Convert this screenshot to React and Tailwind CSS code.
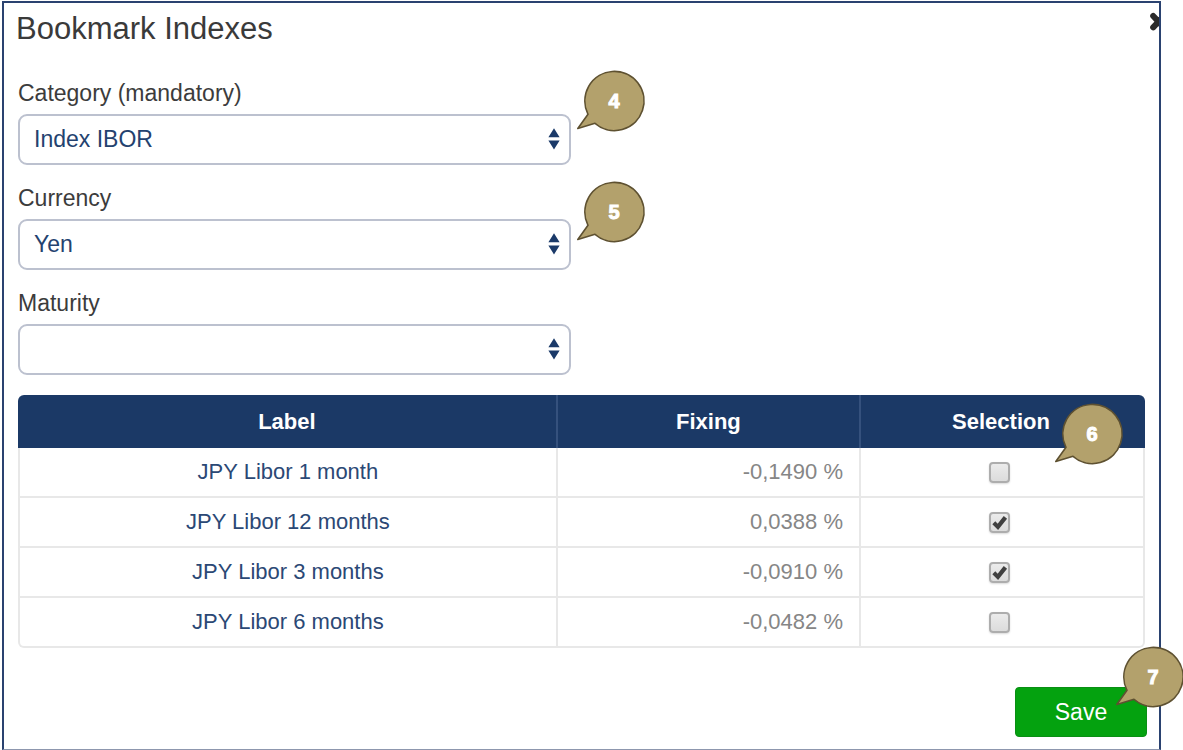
import { useState } from 'react';

function Callout({ number, className }) {
  return (
    <div className={`pointer-events-none absolute z-10 h-[62px] w-[70px] ${className}`}>
      <svg viewBox="0 -1 70 62" className="block h-full w-full overflow-visible" aria-hidden="true">
        <path
          d="M12 43.3 A29.6 29.6 0 1 1 19 52.3 L1.8 57.5 Z"
          fill="#b3a16c"
          stroke="#5e5131"
          strokeWidth="1.6"
          strokeLinejoin="round"
        />
      </svg>
      <span className="absolute inset-0 flex items-center justify-center pl-1.5 text-xl font-bold text-white [-webkit-text-stroke:1px_white]">
        {number}
      </span>
    </div>
  );
}

function SelectField({ id, label, options, children }) {
  return (
    <div className="flex flex-col gap-[7px]">
      <label htmlFor={id} className="text-[23px] leading-7 text-[#3c3c3c]">
        {label}
      </label>
      <div className="relative w-full max-w-[553px]">
        <select
          id={id}
          className="block h-[51px] w-full appearance-none rounded-[9px] border-2 border-[#bcc1cf] bg-white pr-10 pl-[14px] text-[23px] text-[#24426f]"
        >
          {options.map((option) => (
            <option key={option}>{option}</option>
          ))}
        </select>
        <svg
          viewBox="0 0 12 22"
          className="pointer-events-none absolute top-[14px] right-[11px] h-[22px] w-3"
          fill="#1b3a69"
          aria-hidden="true"
        >
          <path d="M6 0.3 L11.6 9.2 H0.4 Z M0.4 12.6 H11.6 L6 21.5 Z" />
        </svg>
        {children}
      </div>
    </div>
  );
}

const initialRows = [
  { label: 'JPY Libor 1 month', fixing: '-0,1490 %', selected: false },
  { label: 'JPY Libor 12 months', fixing: '0,0388 %', selected: true },
  { label: 'JPY Libor 3 months', fixing: '-0,0910 %', selected: true },
  { label: 'JPY Libor 6 months', fixing: '-0,0482 %', selected: false },
];

function IndexTable() {
  const [rows, setRows] = useState(initialRows);
  const toggle = (label) =>
    setRows(rows.map((row) => (row.label === label ? { ...row, selected: !row.selected } : row)));

  return (
    <table className="w-full table-fixed border-separate border-spacing-0 text-[22px] leading-7">
      <colgroup>
        <col className="w-[47.9%]" />
        <col className="w-[26.9%]" />
        <col className="w-[25.2%]" />
      </colgroup>
      <thead>
        <tr className="h-[53px] text-white">
          <th className="rounded-tl-md border-r-2 border-[#35517d] bg-[#1b3966] font-bold">Label</th>
          <th className="border-r-2 border-[#35517d] bg-[#1b3966] font-bold">Fixing</th>
          <th className="relative rounded-tr-md bg-[#1b3966] pr-1 font-bold">
            Selection
            <Callout number="6" className="top-[8px] right-[21px]" />
          </th>
        </tr>
      </thead>
      <tbody>
        {rows.map((row) => (
          <tr key={row.label} className="group h-[50px]">
            <td className="border-x-2 border-b-2 border-[#e8e8e8] text-center text-[#2b4875] group-last:rounded-bl-md">
              {row.label}
            </td>
            <td className="border-r-2 border-b-2 border-[#e8e8e8] pr-4 text-right text-[#868686]">
              {row.fixing}
            </td>
            <td className="border-r-2 border-b-2 border-[#e8e8e8] pr-1 group-last:rounded-br-md">
              <div className="relative mx-auto size-[21px]">
                <input
                  type="checkbox"
                  aria-label={row.label}
                  checked={row.selected}
                  onChange={() => toggle(row.label)}
                  className="peer block size-full appearance-none rounded-[4px] border-2 border-[#adadad] bg-linear-to-b from-[#ebebeb] to-[#dcdcdc] shadow-[0_1px_2px_#00000026]"
                />
                <svg
                  viewBox="0 0 21 21"
                  className="pointer-events-none absolute inset-0 hidden size-full peer-checked:block"
                  aria-hidden="true"
                >
                  <path d="M4.8 10.8 L8.9 14.9 L16.4 5.4" fill="none" stroke="#404040" strokeWidth="4.2" />
                </svg>
              </div>
            </td>
          </tr>
        ))}
      </tbody>
    </table>
  );
}

export default function App() {
  return (
    <div className="flex min-h-screen flex-col overflow-x-clip bg-white pt-px pr-[22px] pl-0.5 font-['Liberation_Sans',Arial,sans-serif]">
      <main className="flex-1 border-2 border-b border-[#2a4270] border-b-[#8d97ae]">
        <header className="flex items-start justify-between pt-1.5 pl-3">
          <h1 className="text-[31px] leading-10 text-[#3a3a3a]">Bookmark Indexes</h1>
          <button type="button" aria-label="Close" className="h-9 w-[11px] overflow-hidden">
            <svg viewBox="0 0 11 36" className="block h-full w-full" aria-hidden="true">
              <path
                d="M5.2 7 L10.5 12.7 L5.2 18.4 M15.8 7 L10.5 12.7 L15.8 18.4"
                fill="none"
                stroke="#2b2b2b"
                strokeWidth="6"
                strokeLinecap="round"
              />
            </svg>
          </button>
        </header>

        <form className="pt-[30px]" onSubmit={(event) => event.preventDefault()}>
          <div className="flex flex-col gap-[19px] px-[14px]">
            <SelectField id="category" label="Category (mandatory)" options={['Index IBOR']}>
              <Callout number="4" className="-top-11 left-full ml-[5px]" />
            </SelectField>
            <SelectField id="currency" label="Currency" options={['Yen']}>
              <Callout number="5" className="-top-[38px] left-full ml-[5px]" />
            </SelectField>
            <SelectField id="maturity" label="Maturity" options={['']} />
          </div>
          <div className="px-[14px] pt-5">
            <IndexTable />
          </div>
          <div className="flex justify-end px-3 pt-[39px] pb-2.5">
            <div className="relative">
              <button
                type="submit"
                className="h-[50px] w-[132px] rounded-[4px] border border-[#0a8f14] bg-[#04a20f] text-[23px] text-white"
              >
                Save
              </button>
              <Callout number="7" className="-top-[41px] -right-[38px]" />
            </div>
          </div>
        </form>
      </main>
    </div>
  );
}
